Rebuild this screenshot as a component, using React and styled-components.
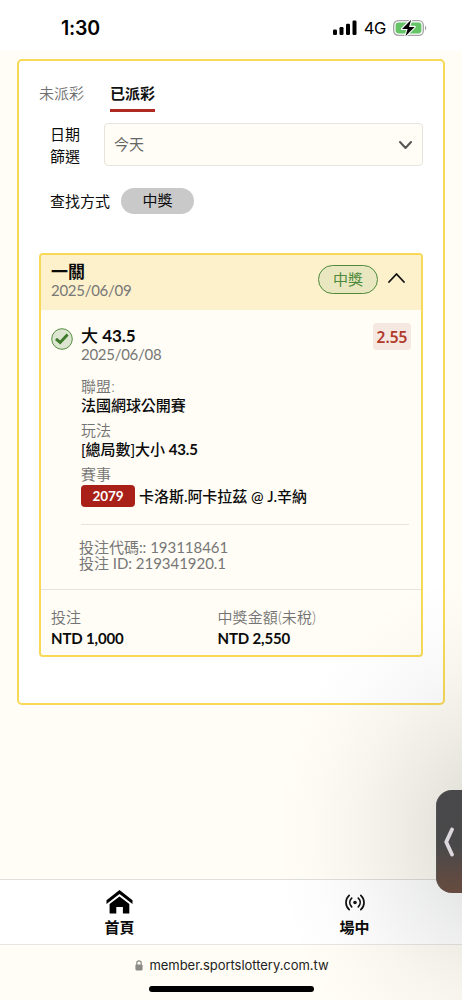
import React from "react";
import styled, { createGlobalStyle } from "styled-components";

const yellow = "#f8d957";
const cream = "#fffdf5";
const rule = "#e6e4de";

const GlobalStyle = createGlobalStyle`
  *, *::before, *::after { box-sizing: border-box; }
  body {
    margin: 0;
    background: ${cream};
    color: #0b0b0b;
    font-family: Lato, "Noto Sans CJK TC", sans-serif;
    font-size: 15px;
  }
`;

const Screen = styled.div`
  position: relative;
  width: 462px;
  height: 1000px;
  overflow: hidden;
  display: flex;
  flex-direction: column;
  background: ${cream};
`;

const StatusBar = styled.header`
  height: 51px;
  flex: none;
  display: flex;
  align-items: center;
  justify-content: space-between;
  padding: 4px 35px 0 61px;
  background: #fff;
  font-family: Inter, "Liberation Sans", sans-serif;
`;

const Clock = styled.span`
  font-size: 19.5px;
  font-weight: 600;
  line-height: 24px;
  letter-spacing: -0.2px;
  color: #000;
`;

const StatusIcons = styled.div`
  display: flex;
  align-items: center;
`;

const Network = styled.span`
  margin: 0 7px 0 7px;
  font-size: 16.5px;
  line-height: 20px;
  letter-spacing: -0.4px;
  color: #000;
`;

const Main = styled.main`
  flex: 1;
  padding: 8px 17px 0;
`;

const Panel = styled.section`
  height: 646px;
  padding: 18px 20px 0;
  border: 2px solid ${yellow};
  border-radius: 5px;
  background: #fff;
`;

const Tabs = styled.nav`
  display: flex;
  gap: 26px;
`;

const Tab = styled.span`
  height: 33px;
  padding-top: 3px;
  line-height: 22px;
  color: ${(p) => (p.$active ? "#111" : "#707070")};
  font-weight: ${(p) => (p.$active ? 700 : 350)};
  border-bottom: 3px solid ${(p) => (p.$active ? "#b02a24" : "transparent")};
`;

const FilterRow = styled.div`
  display: flex;
  align-items: center;
  height: 43px;
  margin-top: 11px;
  padding-left: 11px;
`;

const FilterLabel = styled.span`
  width: ${(p) => p.$width}px;
  line-height: 22px;
  white-space: nowrap;
`;

const Select = styled.div`
  flex: 1;
  height: 43px;
  display: flex;
  align-items: center;
  justify-content: space-between;
  padding: 0 10px 0 9px;
  border: 1px solid ${rule};
  border-radius: 4px;
  background: ${cream};
  color: #666;
`;

const SelectText = styled.span`
  padding-bottom: 1px;
  line-height: 20px;
`;

const MethodRow = styled(FilterRow)`
  height: 26px;
  margin-top: 22px;
`;

const Chip = styled.span`
  width: 73px;
  height: 26px;
  line-height: 25px;
  border-radius: 13px;
  background: #c9c9c9;
  text-align: center;
`;

const Ticket = styled.article`
  height: 404px;
  margin-top: 39px;
  border: 2px solid ${yellow};
  border-radius: 4px;
  background: ${cream};
  overflow: hidden;
`;

const TicketHeader = styled.div`
  height: 55px;
  display: flex;
  align-items: center;
  padding: 0 16px 3px 10px;
  background: #fdf1cb;
`;

const Stack = styled.div`
  flex: 1;
  display: flex;
  flex-direction: column;
`;

const Heading = styled.span`
  font-size: 17px;
  font-weight: ${(p) => p.$weight || 700};
  line-height: 18px;
  white-space: nowrap;
`;

const DateText = styled.span`
  font-size: 15px;
  letter-spacing: -0.28px;
  line-height: 18px;
  color: #777;
`;

const WinBadge = styled.span`
  width: 60px;
  height: 29px;
  margin: -4px 10px 0 0;
  border: 1px solid #4f8a3c;
  border-radius: 15px;
  background: #e8e7bf;
  color: #4f8a3c;
  line-height: 27px;
  text-align: center;
`;

const HeaderArrow = styled.span`
  display: flex;
  margin-bottom: 7px;
`;

const Bet = styled.div`
  height: 280px;
  display: flex;
  padding: 18px 12px 0 10px;
  border-bottom: 1px solid ${rule};
`;

const BetBody = styled.div`
  flex: 1;
  margin-left: 8px;
`;

const BetTop = styled.div`
  display: flex;
  align-items: flex-start;
  height: 49px;
  margin: -1px -2px 1px 0;
`;

const Odds = styled.span`
  width: 38px;
  height: 27px;
  margin-top: -4px;
  border-radius: 4px;
  background: #f5e8e1;
  color: #b03a2c;
  font-family: "Noto Sans", "Open Sans", sans-serif;
  font-size: 15.5px;
  font-weight: 600;
  line-height: 28px;
  text-align: center;
`;

const Field = styled.div`
  display: flex;
  flex-direction: column;
  height: ${(p) => p.$height || 44}px;
`;

const Label = styled.span`
  line-height: 18px;
  font-weight: 350;
  letter-spacing: 0.1px;
  color: #737373;
`;

const Value = styled.span`
  display: flex;
  align-items: center;
  margin-top: ${(p) => p.$gap || 0}px;
  line-height: 20px;
  font-weight: 500;
  letter-spacing: -0.04px;
  white-space: pre;
`;

const Strong = styled.b`
  font-weight: 700;
  letter-spacing: -0.14px;
`;

const Code = styled.span`
  width: 54px;
  height: 22px;
  margin-right: 4px;
  border-radius: 4px;
  background: #a82018;
  color: #fff;
  font-size: 13.5px;
  font-weight: 700;
  line-height: 22px;
  text-align: center;
`;

const BetMeta = styled.div`
  display: flex;
  flex-direction: column;
  margin-top: 9px;
  padding-top: 14px;
  border-top: 1px solid ${rule};
`;

const MetaLine = styled.span`
  margin-left: -2px;
  font-size: 15px;
  letter-spacing: -0.03px;
  line-height: 16px;
  color: #777;
`;

const Totals = styled.div`
  display: grid;
  grid-template-columns: 166.5px 1fr;
  padding: 18px 10px 0;
`;

const TabBar = styled.nav`
  height: 66px;
  flex: none;
  display: grid;
  grid-template-columns: 1fr 1fr;
  border-top: 1px solid #dededc;
  border-bottom: 1px solid #e8e4e4;
  background: #fff;
`;

const NavItem = styled.a`
  display: flex;
  flex-direction: column;
  align-items: center;
  padding: 8px 0 0 ${(p) => p.$left || 0}px;
  font-weight: 700;
  line-height: 22px;
  color: #0b0b0b;
`;

const NavIcon = styled.span`
  height: 28px;
  display: flex;
  align-items: center;
`;

const AddressBar = styled.footer`
  height: 55px;
  flex: none;
  display: flex;
  flex-direction: column;
  align-items: center;
`;

const Address = styled.div`
  height: 41px;
  display: flex;
  align-items: center;
  gap: 6px;
  padding: 0 0 1px 2px;
  font-family: Inter, "Liberation Sans", sans-serif;
  font-size: 13px;
  letter-spacing: -0.03px;
  color: #222;
`;

const HomeIndicator = styled.div`
  width: 165px;
  height: 6px;
  border-radius: 3px;
  background: #000;
`;

const Shade = styled.div`
  position: absolute;
  inset: 0;
  pointer-events: none;
  background: radial-gradient(
    ellipse 215px 265px at 490px 835px,
    rgba(20, 25, 25, 0.15) 0%,
    rgba(20, 25, 25, 0.115) 22%,
    rgba(20, 25, 25, 0.07) 42%,
    rgba(20, 25, 25, 0.034) 62%,
    rgba(20, 25, 25, 0.011) 82%,
    rgba(20, 25, 25, 0) 100%
  );
`;

const Handle = styled.div`
  position: absolute;
  right: 0;
  top: 790px;
  width: 26px;
  height: 103px;
  display: flex;
  align-items: center;
  padding-left: 7px;
  border-radius: 16px 0 0 16px;
  background: linear-gradient(#48484a 0%, #4a494a 55%, #5d4a42 82%, #664b3f 100%);
  box-shadow: inset 1px 0 0 rgba(90, 90, 90, 0.6);
`;

function Signal() {
  return (
    <svg width="24" height="16" viewBox="0 0 24 16">
      <rect x="0" y="9.5" width="4" height="5.5" rx="1.2" />
      <rect x="6.5" y="7" width="4" height="8" rx="1.2" />
      <rect x="13" y="3.8" width="4" height="11.2" rx="1.2" />
      <rect x="19.5" y="0.5" width="4" height="14.5" rx="1.2" />
    </svg>
  );
}

function Battery() {
  return (
    <svg width="34" height="18" viewBox="0 0 34 18">
      <rect x="0.7" y="1.7" width="29.6" height="14.6" rx="4.6" fill="#fff" stroke="#a3a3a3" strokeWidth="1.3" />
      <rect x="2.6" y="3.6" width="25.8" height="10.8" rx="2.8" fill="#65c466" />
      <path d="M32 6.5c1.6.7 1.6 4.3 0 5z" fill="#a3a3a3" />
      <path d="M18.2 .8 9 9.9h5.6l-2.2 7.3 9.2-9.3h-5.6z" fill="#000" stroke="#fff" strokeWidth="2.2" paintOrder="stroke" strokeLinejoin="round" />
    </svg>
  );
}

function Chevron({ width, height, up, color, weight }) {
  const d = up ? `M1 ${height - 1}L${width / 2} 1L${width - 1} ${height - 1}` : `M1 1L${width / 2} ${height - 1}L${width - 1} 1`;
  return (
    <svg width={width} height={height} fill="none" stroke={color} strokeWidth={weight}>
      <path d={d} strokeLinecap="round" strokeLinejoin="round" />
    </svg>
  );
}

function CheckMark() {
  return (
    <svg width="22" height="22" viewBox="0 0 22 22" fill="none">
      <circle cx="11" cy="11" r="10.3" fill="#dbe5cf" stroke="#568d45" />
      <path d="M5 10.8 9.2 14.4 16.6 6.6" stroke="#3f7a2c" strokeWidth="2.9" />
    </svg>
  );
}

function House() {
  return (
    <svg width="27" height="24" viewBox="0 0 27 24" fill="#000">
      <path d="M13.5 0 26.5 10.2V14L13.5 3.9.5 14v-3.8z" />
      <path d="M13.5 6.5 23.3 14v9.5h-6.4V17h-6.6v6.5H3.6V14z" />
    </svg>
  );
}

function Live() {
  return (
    <svg width="20" height="17" viewBox="0 0 20 17" fill="none" stroke="#111" strokeWidth="1.7" strokeLinecap="round">
      <circle cx="10" cy="8.5" r="1.8" fill="#111" stroke="none" />
      <path d="M4.2 1.3C-.1 5.2-.1 11.8 4.2 15.7M15.8 1.3c4.3 3.9 4.3 10.5 0 14.4" />
      <path d="M6.7 4.2c-2.5 2.5-2.5 6.1 0 8.6M13.3 4.2c2.5 2.5 2.5 6.1 0 8.6" />
    </svg>
  );
}

function Lock() {
  return (
    <svg width="8" height="11" viewBox="0 0 8 11">
      <path d="M1.8 5V3a2.2 2.2 0 0 1 4.4 0v2" fill="none" stroke="#8a8a86" strokeWidth="1.2" />
      <rect x="0.4" y="4.4" width="7.2" height="6" rx="1.1" fill="#8a8a86" />
    </svg>
  );
}

export default function App() {
  return (
    <Screen>
      <GlobalStyle />
      <StatusBar>
        <Clock>1:30</Clock>
        <StatusIcons>
          <Signal />
          <Network>4G</Network>
          <Battery />
        </StatusIcons>
      </StatusBar>

      <Main>
        <Panel>
          <Tabs>
            <Tab>未派彩</Tab>
            <Tab $active>已派彩</Tab>
          </Tabs>
          <FilterRow>
            <FilterLabel $width={54}>日期<br />篩選</FilterLabel>
            <Select>
              <SelectText>今天</SelectText>
              <Chevron width={13} height={8} color="#555" weight={2} />
            </Select>
          </FilterRow>
          <MethodRow>
            <FilterLabel $width={71}>查找方式</FilterLabel>
            <Chip>中獎</Chip>
          </MethodRow>

          <Ticket>
            <TicketHeader>
              <Stack>
                <Heading>一關</Heading>
                <DateText>2025/06/09</DateText>
              </Stack>
              <WinBadge>中獎</WinBadge>
              <HeaderArrow>
                <Chevron up width={17} height={10} color="#111" weight={1.8} />
              </HeaderArrow>
            </TicketHeader>
            <Bet>
              <CheckMark />
              <BetBody>
                <BetTop>
                  <Stack>
                    <Heading $weight={500}>大 <Strong>43.5</Strong></Heading>
                    <DateText>2025/06/08</DateText>
                  </Stack>
                  <Odds>2.55</Odds>
                </BetTop>
                <Field>
                  <Label>聯盟:</Label>
                  <Value>法國網球公開賽</Value>
                </Field>
                <Field>
                  <Label>玩法</Label>
                  <Value>[總局數]大小 <Strong>43.5</Strong></Value>
                </Field>
                <Field $height={50}>
                  <Label>賽事</Label>
                  <Value $gap={2}><Code>2079</Code>卡洛斯.阿卡拉茲 @ J.辛納</Value>
                </Field>
                <BetMeta>
                  <MetaLine>投注代碼:: 193118461</MetaLine>
                  <MetaLine>投注 ID: 219341920.1</MetaLine>
                </BetMeta>
              </BetBody>
            </Bet>
            <Totals>
              <Field>
                <Label>投注</Label>
                <Value $gap={2}><Strong>NTD 1,000</Strong></Value>
              </Field>
              <Field>
                <Label>中獎金額(未稅)</Label>
                <Value $gap={2}><Strong>NTD 2,550</Strong></Value>
              </Field>
            </Totals>
          </Ticket>
        </Panel>
      </Main>

      <TabBar>
        <NavItem $left={8}>
          <NavIcon><House /></NavIcon>
          首頁
        </NavItem>
        <NavItem $left={16}>
          <NavIcon><Live /></NavIcon>
          場中
        </NavItem>
      </TabBar>
      <AddressBar>
        <Address>
          <Lock />
          member.sportslottery.com.tw
        </Address>
        <HomeIndicator />
      </AddressBar>
      <Shade />
      <Handle>
        <svg width="12" height="30" viewBox="0 0 12 30" fill="none" stroke="#dcd8de" strokeWidth="3.8" strokeLinecap="round" strokeLinejoin="round">
          <path d="M9 2.5 3.2 15 9 27.5" />
        </svg>
      </Handle>
    </Screen>
  );
}
